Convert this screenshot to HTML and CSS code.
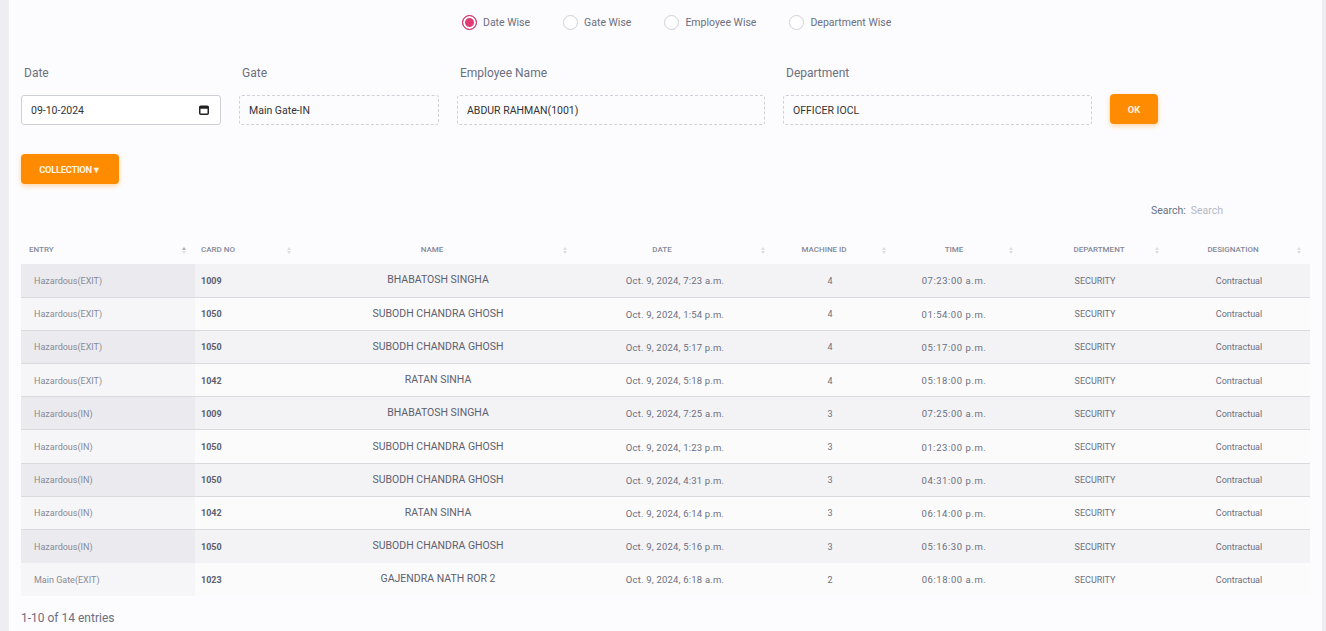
FILE: index.html
```html
<!DOCTYPE html>
<html>
<head>
<meta charset="utf-8">
<link rel="stylesheet" href="styles.css">
</head>
<body>
<div class="panel">
  <div class="radios">
    <label class="radio checked"><span class="dot"></span><span>Date Wise</span></label>
    <label class="radio"><span class="dot"></span><span>Gate Wise</span></label>
    <label class="radio"><span class="dot"></span><span>Employee Wise</span></label>
    <label class="radio"><span class="dot"></span><span>Department Wise</span></label>
  </div>

  <div class="form-row">
    <div class="field w200">
      <div class="flabel">Date</div>
      <div class="finput solid">
        <span>09-10-2024</span>
        <svg class="cal" width="10" height="10" viewBox="0 0 10 10"><rect x="0.75" y="1.25" width="8.5" height="8" rx="1" fill="none" stroke="#222" stroke-width="1.5"/><rect x="0.75" y="1.25" width="8.5" height="2.5" fill="#222"/></svg>
      </div>
    </div>
    <div class="field w200">
      <div class="flabel">Gate</div>
      <div class="finput dashed">Main Gate-IN</div>
    </div>
    <div class="field w308">
      <div class="flabel">Employee Name</div>
      <div class="finput dashed">ABDUR RAHMAN(1001)</div>
    </div>
    <div class="field w309">
      <div class="flabel">Department</div>
      <div class="finput dashed">OFFICER IOCL</div>
    </div>
    <button class="btn ok">OK</button>
  </div>

  <button class="btn collection">COLLECTION▼</button>

  <div class="search-row">
    <span class="search-label">Search:</span>
    <span class="search-input">Search</span>
  </div>

  <table class="grid">
    <colgroup>
      <col class="c-entry"><col class="c-card"><col class="c-name"><col class="c-date"><col class="c-mach"><col class="c-time"><col class="c-dept"><col class="c-desig">
    </colgroup>
    <thead>
      <tr>
        <th class="left sorted">ENTRY<span class="sort"><i class="up"></i><i class="dn"></i></span></th>
        <th class="left">CARD NO<span class="sort"><i class="up"></i><i class="dn"></i></span></th>
        <th>NAME<span class="sort"><i class="up"></i><i class="dn"></i></span></th>
        <th class="pr-date">DATE<span class="sort"><i class="up"></i><i class="dn"></i></span></th>
        <th>MACHINE ID<span class="sort s-mach"><i class="up"></i><i class="dn"></i></span></th>
        <th class="pr-time">TIME<span class="sort"><i class="up"></i><i class="dn"></i></span></th>
        <th class="pr-dept">DEPARTMENT<span class="sort"><i class="up"></i><i class="dn"></i></span></th>
        <th>DESIGNATION<span class="sort"><i class="up"></i><i class="dn"></i></span></th>
      </tr>
    </thead>
    <tbody>
      <tr><td class="entry">Hazardous(EXIT)</td><td class="card">1009</td><td class="name">BHABATOSH SINGHA</td><td class="dt">Oct. 9, 2024, 7:23 a.m.</td><td>4</td><td class="tm">07:23:00 a.m.</td><td>SECURITY</td><td>Contractual</td></tr>
      <tr><td class="entry">Hazardous(EXIT)</td><td class="card">1050</td><td class="name">SUBODH CHANDRA GHOSH</td><td class="dt">Oct. 9, 2024, 1:54 p.m.</td><td>4</td><td class="tm">01:54:00 p.m.</td><td>SECURITY</td><td>Contractual</td></tr>
      <tr><td class="entry">Hazardous(EXIT)</td><td class="card">1050</td><td class="name">SUBODH CHANDRA GHOSH</td><td class="dt">Oct. 9, 2024, 5:17 p.m.</td><td>4</td><td class="tm">05:17:00 p.m.</td><td>SECURITY</td><td>Contractual</td></tr>
      <tr><td class="entry">Hazardous(EXIT)</td><td class="card">1042</td><td class="name">RATAN SINHA</td><td class="dt">Oct. 9, 2024, 5:18 p.m.</td><td>4</td><td class="tm">05:18:00 p.m.</td><td>SECURITY</td><td>Contractual</td></tr>
      <tr><td class="entry">Hazardous(IN)</td><td class="card">1009</td><td class="name">BHABATOSH SINGHA</td><td class="dt">Oct. 9, 2024, 7:25 a.m.</td><td>3</td><td class="tm">07:25:00 a.m.</td><td>SECURITY</td><td>Contractual</td></tr>
      <tr><td class="entry">Hazardous(IN)</td><td class="card">1050</td><td class="name">SUBODH CHANDRA GHOSH</td><td class="dt">Oct. 9, 2024, 1:23 p.m.</td><td>3</td><td class="tm">01:23:00 p.m.</td><td>SECURITY</td><td>Contractual</td></tr>
      <tr><td class="entry">Hazardous(IN)</td><td class="card">1050</td><td class="name">SUBODH CHANDRA GHOSH</td><td class="dt">Oct. 9, 2024, 4:31 p.m.</td><td>3</td><td class="tm">04:31:00 p.m.</td><td>SECURITY</td><td>Contractual</td></tr>
      <tr><td class="entry">Hazardous(IN)</td><td class="card">1042</td><td class="name">RATAN SINHA</td><td class="dt">Oct. 9, 2024, 6:14 p.m.</td><td>3</td><td class="tm">06:14:00 p.m.</td><td>SECURITY</td><td>Contractual</td></tr>
      <tr><td class="entry">Hazardous(IN)</td><td class="card">1050</td><td class="name">SUBODH CHANDRA GHOSH</td><td class="dt">Oct. 9, 2024, 5:16 p.m.</td><td>3</td><td class="tm">05:16:30 p.m.</td><td>SECURITY</td><td>Contractual</td></tr>
      <tr><td class="entry">Main Gate(EXIT)</td><td class="card">1023</td><td class="name">GAJENDRA NATH ROR 2</td><td class="dt">Oct. 9, 2024, 6:18 a.m.</td><td>2</td><td class="tm">06:18:00 a.m.</td><td>SECURITY</td><td>Contractual</td></tr>
    </tbody>
  </table>

  <div class="info">1-10 of 14 entries</div>
</div>
</body>
</html>
```

FILE: styles.css
```css
* { box-sizing: border-box; }
html, body { margin: 0; padding: 0; }
body {
  background: #ededf2;
  font-family: Roboto, "Liberation Sans", sans-serif;
  color: #6b6f80;
  height: 631px;
  overflow: hidden;
}
.panel {
  margin: 0 4px 0 9px;
  background: #fcfcfe;
  min-height: 631px;
  padding: 0 12px;
}

/* radios */
.radios {
  display: flex;
  align-items: center;
  height: 44px;
  padding-left: 441px;
}
.radio {
  display: flex;
  align-items: center;
  gap: 6px;
  font-size: 10.5px;
  color: #6b6f80;
  margin-right: 33px;
}
.radio .dot {
  width: 15px;
  height: 15px;
  border-radius: 50%;
  border: 1px solid #cfd0d6;
  background: #fff;
}
.radio.checked .dot {
  border: 1px solid #c9285e;
  background: #e23a73;
  box-shadow: inset 0 0 0 2px #fff;
}

/* form */
.form-row {
  display: flex;
  align-items: flex-end;
  gap: 18px;
  margin-top: 22px;
}
.field { display: flex; flex-direction: column; }
.w200 { width: 200px; }
.w308 { width: 308px; }
.w309 { width: 309px; }
.flabel {
  font-size: 12px;
  line-height: 14px;
  color: #6b6f80;
  padding-left: 3px;
  margin-bottom: 15px;
}
.finput {
  height: 30px;
  border-radius: 3px;
  font-size: 10.5px;
  color: #333;
  display: flex;
  align-items: center;
  padding: 0 9px;
}
.finput.solid {
  border: 1px solid #cdcfd6;
  background: #fff;
  justify-content: space-between;
  padding-right: 11px;
}
.finput.dashed {
  border: 1px dashed #cfd1d8;
}
.cal { display: block; }

.btn {
  border: none;
  background: #ff8c00;
  color: #fff3e0;
  font-family: Roboto, "Liberation Sans", sans-serif;
  font-weight: 700;
  font-size: 9.4px;
  border-radius: 4px;
  height: 30px;
  box-shadow: 0 2px 5px rgba(255, 140, 0, 0.35);
  padding: 0;
  cursor: pointer;
}
.btn.ok { width: 48px; margin-bottom: 1px; }
.btn.collection {
  display: block;
  width: 98px;
  margin-top: 29px;
  letter-spacing: -0.3px;
}

/* search */
.search-row {
  display: flex;
  justify-content: flex-end;
  align-items: center;
  gap: 5px;
  height: 20px;
  margin-top: 16px;
  padding-right: 87px;
  font-size: 10.5px;
}
.search-label { color: #6b6f80; }
.search-input { color: #b6b8c3; }

/* table */
.grid {
  width: 1289px;
  border-collapse: collapse;
  table-layout: fixed;
  margin-top: 16px;
}
.c-entry { width: 174px; }
.c-card { width: 105px; }
.c-name { width: 276px; }
.c-date { width: 198px; }
.c-mach { width: 112px; }
.c-time { width: 136px; }
.c-dept { width: 146px; }
.c-desig { width: 142px; }

.grid th {
  position: relative;
  font-size: 8px;
  font-weight: 500;
  color: #868997;
  text-align: center;
  padding: 9px 12px 9px 0;
  line-height: 10px;
  height: 28px;
}
.grid th.left { text-align: left; padding-left: 8px; }
.grid th.left + th.left { padding-left: 6px; }
.grid th.pr-date { padding-right: 26px; }
.grid th.pr-time { padding-right: 0; }
.grid th.pr-dept { padding-right: 0; padding-left: 8px; }
.sort {
  position: absolute;
  right: 9px;
  top: 11px;
  display: flex;
  flex-direction: column;
  gap: 1px;
}
.sort.s-mach { right: 0; }
.sort i {
  display: block;
  width: 0;
  height: 0;
  border-left: 2px solid transparent;
  border-right: 2px solid transparent;
}
.sort .up { border-bottom: 3px solid #dcdde3; }
.sort .dn { border-top: 3px solid #dcdde3; }
th.sorted .sort .up { border-bottom-color: #a9abb5; }

.grid td {
  height: 33.2px;
  font-size: 9px;
  color: #6b6f80;
  text-align: center;
  padding: 1px 6px 0;
  background: #fbfbfc;
  white-space: nowrap;
}
.grid td.dt { font-size: 9.5px; letter-spacing: 0.2px; }
.grid td.tm { font-size: 9.5px; letter-spacing: 0.55px; }
.grid tbody tr:nth-child(odd) td { background: #f3f3f6; }
.grid tbody tr:nth-child(odd) td.entry { background: #ebebef; }
.grid td.entry {
  text-align: left;
  padding-left: 13px;
  color: #878a96;
  background: #f6f6f8;
}
.grid td.card {
  text-align: left;
  font-weight: 700;
  color: #5d606e;
}
.grid td.name {
  font-size: 10.5px;
  color: #5d606e;
  padding-top: 0;
  padding-bottom: 1px;
}
.grid tbody tr:not(:last-child):not(:nth-last-child(2)) td {
  border-bottom: 1px solid #d9d9de;
}

.info {
  font-size: 12px;
  color: #6b6f80;
  margin-top: 15px;
}
```
